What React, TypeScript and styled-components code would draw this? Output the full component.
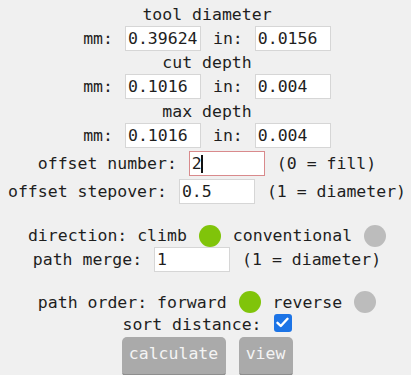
import React from "react";
import styled, { createGlobalStyle } from "styled-components";

const Global = createGlobalStyle`
  html, body { margin: 0; padding: 0; background: #f0f0f0; }
  body { font-family: "DejaVu Sans Mono", "Liberation Mono", monospace; font-size: 16.5px; color: #1e1e1e; }
`;

const Page = styled.div`
  display: flex;
  flex-direction: column;
  padding-left: 3px;
  padding-top: 2px;
  width: 411px;
  box-sizing: border-box;
  overflow: hidden;
`;

const Row = styled.div<{ $mt?: number; $h?: number }>`
  display: flex;
  justify-content: center;
  align-items: center;
  gap: 12px;
  height: ${(p) => p.$h ?? 24}px;
  margin-top: ${(p) => p.$mt ?? 0}px;
  white-space: pre;
`;

const Label = styled.span`
  line-height: 1;
  padding-top: 2px;
`;

const FieldWrap = styled.span`
  position: relative;
  display: inline-flex;
`;

const Caret = styled.span`
  position: absolute;
  left: 12px;
  top: 4px;
  width: 2px;
  height: 18px;
  background: #111;
`;

const Field = styled.input<{ $alert?: boolean }>`
  width: 76px;
  height: 25px;
  box-sizing: border-box;
  margin: 0;
  padding: 0 2px;
  border: 1px solid ${(p) => (p.$alert ? "#d98a8c" : "#d6d6d6")};
  background: #fff;
  font-family: "DejaVu Sans Mono", "Liberation Mono", monospace;
  font-size: 16.5px;
  color: #1e1e1e;
  outline: none;
`;

const Dot = styled.span<{ $on?: boolean }>`
  width: 22px;
  height: 22px;
  border-radius: 50%;
  background: ${(p) => (p.$on ? "#80c40a" : "#bcbcbc")};
  flex: none;
`;

const Check = styled.span`
  width: 18px;
  height: 18px;
  border-radius: 3px;
  background: #1c74e6;
  display: flex;
  align-items: center;
  justify-content: center;
  margin-top: -3px;
  flex: none;
`;

const Button = styled.button<{ $w: number }>`
  width: ${(p) => p.$w}px;
  height: 40px;
  box-sizing: border-box;
  padding: 0 0 3px;
  margin: 0;
  border: none;
  border-radius: 5px;
  background: #aaaaaa;
  border-bottom: 3px solid #8e8e8e;
  color: #f4f4f4;
  font-family: "DejaVu Sans Mono", "Liberation Mono", monospace;
  font-size: 16.5px;
  line-height: 1;
`;

const ButtonRow = styled(Row)`
  align-items: flex-start;
  gap: 13px;
  height: 40px;
`;

export default function App() {
  return (
    <>
      <Global />
      <Page>
        <Row><Label>tool diameter</Label></Row>
        <Row>
          <Label>mm:</Label>
          <Field defaultValue="0.39624" />
          <Label>in:</Label>
          <Field defaultValue="0.0156" />
        </Row>
        <Row><Label>cut depth</Label></Row>
        <Row>
          <Label>mm:</Label>
          <Field defaultValue="0.1016" />
          <Label>in:</Label>
          <Field defaultValue="0.004" />
        </Row>
        <Row $mt={1}><Label>max depth</Label></Row>
        <Row>
          <Label>mm:</Label>
          <Field defaultValue="0.1016" />
          <Label>in:</Label>
          <Field defaultValue="0.004" />
        </Row>
        <Row $mt={4}>
          <Label>offset number:</Label>
          <FieldWrap>
            <Field $alert defaultValue="2" />
            <Caret />
          </FieldWrap>
          <Label>(0 = fill)</Label>
        </Row>
        <Row $mt={4}>
          <Label>offset stepover:</Label>
          <Field defaultValue="0.5" />
          <Label>(1 = diameter)</Label>
        </Row>
        <Row $mt={21} $h={23}>
          <Label>direction: climb</Label>
          <Dot $on />
          <Label>conventional</Label>
          <Dot />
        </Row>
        <Row>
          <Label>path merge:</Label>
          <Field defaultValue="1" />
          <Label>(1 = diameter)</Label>
        </Row>
        <Row $mt={20} $h={22}>
          <Label>path order: forward</Label>
          <Dot $on />
          <Label>reverse</Label>
          <Dot />
        </Row>
        <Row $h={22}>
          <Label>sort distance:</Label>
          <Check>
            <svg width="13" height="11" viewBox="0 0 13 11">
              <path d="M1.5 5.8 L4.8 9 L11.5 1.8" fill="none" stroke="#fff" strokeWidth="2.4" strokeLinecap="round" strokeLinejoin="round" />
            </svg>
          </Check>
        </Row>
        <ButtonRow $mt={2}>
          <Button $w={104}>calculate</Button>
          <Button $w={54}>view</Button>
        </ButtonRow>
      </Page>
    </>
  );
}
